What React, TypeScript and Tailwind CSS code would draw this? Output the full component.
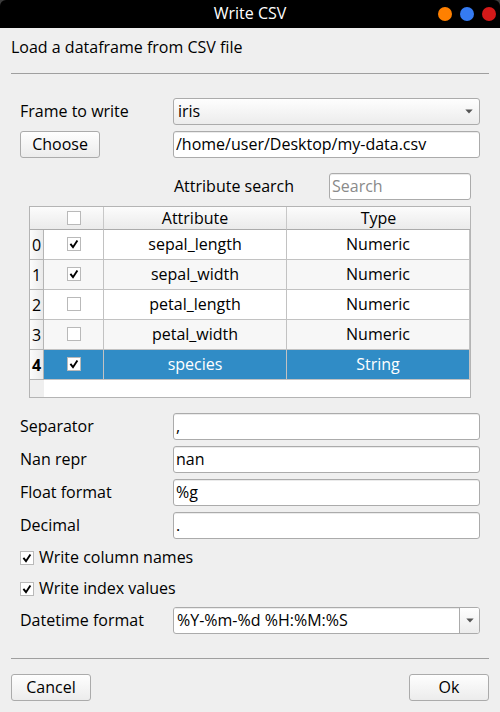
import { useState } from 'react';
import type { ReactNode } from 'react';

const raised = 'border border-[#ababab] rounded-[3px] bg-linear-to-b from-[#fefefe] to-[#ececec]';
const field =
  'h-[27px] w-full min-w-0 rounded-[3px] border border-[#ababab] bg-white px-[2px] pb-[2px] shadow-[inset_0_1px_0_#ebebeb] outline-none placeholder:text-[#8a8a8a]';

function Tick({ id, label, initial = false }: { id?: string; label?: string; initial?: boolean }) {
  return (
    <span className="inline-grid size-[14px] shrink-0 align-top">
      <input
        id={id}
        type="checkbox"
        aria-label={label}
        defaultChecked={initial}
        className="peer col-start-1 row-start-1 size-[14px] appearance-none border border-[#b9b9b9] bg-white"
      />
      <svg
        viewBox="0 0 14 14"
        aria-hidden="true"
        className="pointer-events-none invisible col-start-1 row-start-1 size-[14px] peer-checked:visible"
      >
        <path d="M3.4 6.8 L6 10.2 L10.4 3.4" fill="none" stroke="#000" strokeWidth="1.9" />
      </svg>
    </span>
  );
}

function Arrow() {
  return (
    <svg viewBox="0 0 8 5" aria-hidden="true" className="pointer-events-none h-[5px] w-[8px]">
      <path d="M0.3 0.5 H7.7 L4 4.5 Z" fill="#555" />
    </svg>
  );
}

function Row({ id, label, children }: { id: string; label: string; children: ReactNode }) {
  return (
    <div className="flex items-center">
      <label htmlFor={id} className="w-[153px] shrink-0 pb-[2px]">
        {label}
      </label>
      {children}
    </div>
  );
}

const attributes = [
  { name: 'sepal_length', type: 'Numeric', on: true },
  { name: 'sepal_width', type: 'Numeric', on: true },
  { name: 'petal_length', type: 'Numeric', on: false },
  { name: 'petal_width', type: 'Numeric', on: false },
  { name: 'species', type: 'String', on: true },
];

function AttributeTable() {
  const [selected, setSelected] = useState(4);
  const head = 'h-[23px] border-b border-[#ababab] p-0 font-normal';
  const cell = 'h-[30px] border-r border-b border-[#c2c2c2] p-0 pb-[2px] text-center';
  return (
    <div className="mx-[9px] border border-[#b4b4b4] bg-white">
      <table className="w-full table-fixed border-separate border-spacing-0">
        <colgroup>
          <col className="w-[14px]" />
          <col className="w-[60px]" />
          <col />
          <col />
        </colgroup>
        <thead>
          <tr className="bg-linear-to-b from-[#fcfcfc] to-[#eaeaea]">
            <td className={head} />
            <th className={`${head} border-r border-r-[#c8c8c8]`}>
              <span className="flex justify-center">
                <Tick label="Select all attributes" />
              </span>
            </th>
            <th className={`${head} border-r border-r-[#c8c8c8]`}>Attribute</th>
            <th className={head}>Type</th>
          </tr>
        </thead>
        <tbody>
          {attributes.map((a, i) => (
            <tr
              key={a.name}
              onClick={() => setSelected(i)}
              className={i === selected ? 'bg-[#308cc6] text-white' : i % 2 ? 'bg-[#f7f7f7]' : 'bg-white'}
            >
              <th
                scope="row"
                className={`h-[30px] border-r border-b border-[#b4b4b4] bg-linear-to-r from-[#fcfcfc] to-[#eaeaea] p-0 text-black ${
                  i === selected ? 'font-bold' : 'font-normal'
                }`}
              >
                <span className="flex justify-center">{i}</span>
              </th>
              <td className={cell}>
                <span className="flex justify-center">
                  <Tick label={a.name} initial={a.on} />
                </span>
              </td>
              <td className={cell}>{a.name}</td>
              <td className={cell}>{a.type}</td>
            </tr>
          ))}
        </tbody>
      </table>
      <div className="h-[17px] w-[14px] bg-[#efefef]" />
    </div>
  );
}

export default function App() {
  return (
    <div className="min-h-screen bg-[#efefef] font-['Open_Sans','Noto_Sans',sans-serif] text-[16px] leading-[20px] text-black">
      <header className="bg-[#3c3c3c]">
        <div className="grid h-[28px] grid-cols-[1fr_auto_1fr] items-center rounded-t-[6px] bg-black px-[4px] text-white">
          <h1 className="col-start-2 pb-[2px] font-medium">Write CSV</h1>
          <div className="flex justify-end gap-2">
            <button type="button" aria-label="Minimize" className="size-[14px] rounded-full bg-[#ff8000]" />
            <button type="button" aria-label="Maximize" className="size-[14px] rounded-full bg-[#357bf2]" />
            <button type="button" aria-label="Close" className="size-[14px] rounded-full bg-[#d41919]" />
          </div>
        </div>
      </header>

      <main className="px-[11px] pt-[9px] pb-[11px]">
        <p>Load a dataframe from CSV file</p>
        <hr className="mt-4 border-[#9f9f9f]" />

        <form className="mt-6 flex flex-col gap-[6px] px-[9px]" onSubmit={(e) => e.preventDefault()}>
          <Row id="frame" label="Frame to write">
            <div className="grid min-w-0 flex-1 items-center">
              <select
                id="frame"
                className={`${raised} col-start-1 row-start-1 h-[27px] w-full appearance-none px-[4px] pb-[2px] outline-none`}
              >
                <option>iris</option>
              </select>
              <span className="pointer-events-none col-start-1 row-start-1 mr-[7px] justify-self-end">
                <Arrow />
              </span>
            </div>
          </Row>
          <div className="flex">
            <div className="w-[153px] shrink-0">
              <button type="button" className={`${raised} flex h-[27px] w-[80px] items-center justify-center pb-[2px]`}>
                Choose
              </button>
            </div>
            <input aria-label="File path" className={field} defaultValue="/home/user/Desktop/my-data.csv" />
          </div>

          <div className="mt-[9px] mr-[9px] ml-[154px] flex items-center justify-between">
            <label htmlFor="search" className="pb-[2px]">
              Attribute search
            </label>
            <div className="w-[142px]">
              <input id="search" placeholder="Search" className={field} />
            </div>
          </div>
          <AttributeTable />

          <div className="mt-[9px] flex flex-col gap-[6px]">
            <Row id="separator" label="Separator">
              <input id="separator" className={field} defaultValue="," />
            </Row>
            <Row id="nan" label="Nan repr">
              <input id="nan" className={field} defaultValue="nan" />
            </Row>
            <Row id="float" label="Float format">
              <input id="float" className={field} defaultValue="%g" />
            </Row>
            <Row id="decimal" label="Decimal">
              <input id="decimal" className={field} defaultValue="." />
            </Row>
            <div className="flex h-[25px] items-center gap-[5px]">
              <Tick id="columns" initial />
              <label htmlFor="columns" className="pb-[2px]">
                Write column names
              </label>
            </div>
            <div className="flex h-[25px] items-center gap-[5px]">
              <Tick id="index" initial />
              <label htmlFor="index" className="pb-[2px]">
                Write index values
              </label>
            </div>
            <Row id="datetime" label="Datetime format">
              <div className="flex h-[27px] min-w-0 flex-1 overflow-hidden rounded-[3px] border border-[#ababab] bg-white">
                <input
                  id="datetime"
                  className="min-w-0 flex-1 px-[3px] pb-[2px] shadow-[inset_0_1px_0_#ebebeb] outline-none"
                  defaultValue="%Y-%m-%d %H:%M:%S"
                />
                <button
                  type="button"
                  aria-label="Show datetime formats"
                  className="flex w-[20px] items-center justify-center border-l border-[#ababab] bg-linear-to-b from-[#fefefe] to-[#ececec]"
                >
                  <Arrow />
                </button>
              </div>
            </Row>
          </div>
        </form>

        <hr className="mt-6 border-[#9f9f9f]" />
        <div className="mt-[15px] flex justify-between">
          <button type="button" className={`${raised} flex h-[27px] w-[80px] items-center justify-center pb-[2px]`}>
            Cancel
          </button>
          <button type="button" className={`${raised} flex h-[27px] w-[80px] items-center justify-center pb-[2px]`}>
            Ok
          </button>
        </div>
      </main>
    </div>
  );
}
